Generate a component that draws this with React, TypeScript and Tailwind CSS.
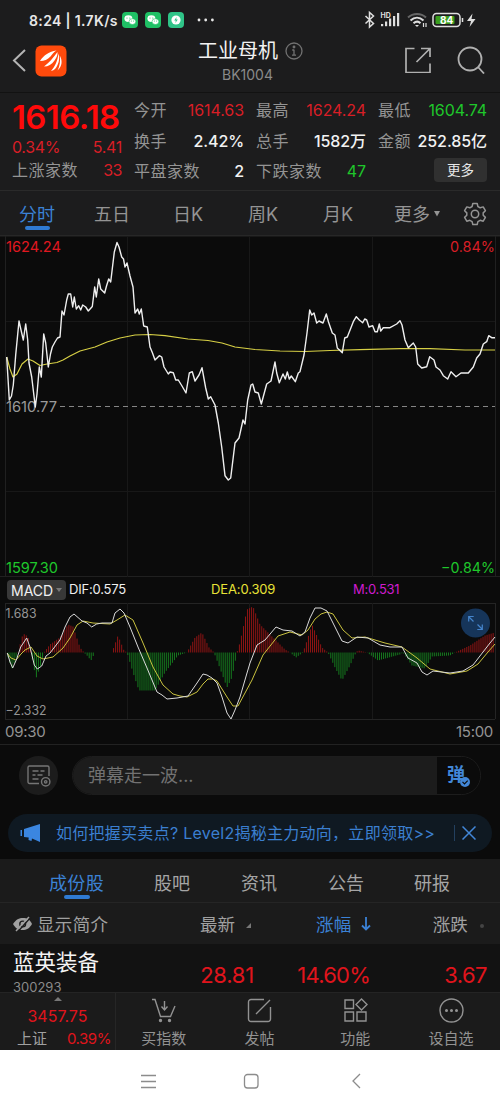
import React from "react";

type Point = [number, number];

const PRICE =
  "6.7,357 9.3,400 11.5,396 13.3,385 15.7,355 19,321 21,330 23.3,340 25.7,324 27.7,340 29,363 31.7,377 35.3,407 37,394 39.3,367 41.3,377 43.7,334 45.7,343 48.3,367 50.5,354 52.3,347 55,342 57.5,338 60,337 62,311 64,315 66.7,300 68.3,294 70.7,294 72.7,307 74.3,297 76.3,309 78.7,305.7 80.7,310 82.7,305 85.7,307 88.3,311 92.3,306.5 94.7,287 96.3,297 98.7,279 100.7,289 104.7,293 106.5,286 108.7,279 110.7,282 114.3,252 117,242.5 119,247 121.7,257 123.5,259 125,267 127,263 130,276 133,287 135,313 137.7,309 139.3,314 141.3,309 143.7,326 147.3,327 150,347 152.5,353 155,360 159.3,355.7 161.7,357 164,367 166.5,371 168.3,374 170,372 173.3,372.7 175.7,380 178.3,380 182,386 186,393 189.3,373 192.3,371.7 195,381 199,375 202,367.7 205.7,388 208.3,399 210.7,396.7 215,405 218.3,423 221.7,447 225,475.7 228.3,480 230.7,478 235,443 239,438 243,420 245,424 247.7,400 251,385 252.7,384 255,392 258.3,393 261.3,404 264,394 266.7,384 271,381 275,362 276.7,373 279.3,382.7 283,374 285.3,379 287.3,372 289.3,379 291.3,376 295.3,381.7 298.3,373 300,371.7 304,355 307,333 309.7,310 311.7,315 314,313 316.7,323 319,321 323,323 326.3,314 328.5,322 332.3,333 335,335 337.3,348 342.3,352.7 344.7,338 347.3,337 353.3,321.7 356.3,316.7 359.3,320 362.7,322.7 364.7,319 366.7,320 369,327 372.7,325.7 375,331.7 377.3,331.7 379.3,324 380.7,331 383.3,327.7 390,327.7 396.7,324 400,320.7 402,325 405,340 408.3,347.7 413.3,343 415.7,347 417.7,364 421.7,368 426.7,366.7 429.7,356.7 434,360 436,367 440,370 443.3,375.7 447.7,379 451,371.7 456,376.7 461,373 468.3,373 473.3,367 476.7,358 480,354 483.3,344 486.7,341.7 488.7,335.7 491.7,337.7 495,337.7";

const AVERAGE =
  "6.7,357 10,369 13,377 17,374 22,364 28,359 33,361 40,365.5 47,364 57,362.5 63,360 70,356 80,351 95,347 107,342 120,338 135,335 150,334.5 165,335.7 188,339 208,340.5 222,343 235,347 255,349.5 280,351 305,351.5 330,350.5 360,349.7 400,348.7 430,348.6 465,350 495,350";

const DIF =
  "7.3,653 10,662 12.7,668 16.7,659 20.7,647 26.7,638 30,647 34.3,665 37.3,669 41.7,666 46,656 50,653 60,640 65,627 70,617 74,614 82,621 87,623 91.7,627 96.7,624 102,623 112,623 115,613 120,609 124,613 130,627 138,647 147,668 157,692 162,695 167,699 177,698 188,696 197,683 203,674 207,675 212,678 217,683 222,697 227,713 231,719 235,710 240,697 247,673 250,663 257,645 265,640 276,627 283,630 292,631 300,636 305,632 310,618 315,608 321,608 327,611 333,623 342,641 348,643 357,637 368,638 380,645 390,647 402,647 408,658 417,663 422,672 427,675 433,671 450,673 463,671 473,665 483,652 490,643 495,637";

const DEA =
  "7,653 11,658 16,660 21,654 25,650 31,647 37,656 43,659 53,657 63,648 70,638 77,625 83,621 93,623 110,624 117,620 125,615 133,620 143,643 153,667 163,685 173,694 180,696 187,697 197,692 203,684 208,679 213,679 217,681 227,697 233,706 238,706 245,693 252,680 263,655 278,636 290,632 302,635 308,630 315,619 321,614 327,612 333,614 343,630 352,638 365,637 385,643 402,647 417,658 430,669 450,674 467,671 478,664 488,652 495,644";

// signed bar heights: negative is above the zero axis
const HISTOGRAM: Point[] = [
  [7, 2], [12, 16], [17, 3], [18, 0], [23, -19], [28, -16], [31, 0], [36, 26],
  [41, 12], [44, 0], [50, -8], [60, -15], [68, -28], [73, -26], [80, -5],
  [84, 0], [87, 3], [91, 8], [95, 0], [112, 0], [118, -17], [124, -2],
  [127, 0], [133, 20], [139, 38], [155, 38], [165, 20], [178, 3], [187, 0],
  [195, -15], [202, -20], [209, -5], [214, 0], [220, 16], [227, 35],
  [232, 25], [237, 0], [240, -10], [247, -43], [253, -46], [260, -28],
  [270, -18], [285, -3], [290, 0], [296, 5], [303, 0], [307, -12],
  [312, -28], [322, -5], [328, 0], [335, 15], [342, 28], [350, 13], [356, 0],
  [358, -2], [367, 0], [378, 8], [400, 2], [403, 0], [412, 13], [425, 16],
  [432, 4], [450, 3], [455, 0], [470, -7], [485, -17], [495, -20],
];

function barAt(x: number) {
  const i = HISTOGRAM.findIndex(([px]) => px >= x);
  if (i <= 0) return HISTOGRAM[0][1];
  const [x0, y0] = HISTOGRAM[i - 1];
  const [x1, y1] = HISTOGRAM[i];
  return y0 + ((y1 - y0) * (x - x0)) / (x1 - x0);
}

const BARS = Array.from({ length: 240 }, (_, i) => 8 + i * 2.03)
  .filter((x) => x < 495)
  .map((x) => ({ x, h: barAt(x) }));

function WeChat() {
  return (
    <svg viewBox="0 0 16 16" className="h-4 w-4">
      <rect width="16" height="16" rx="4" fill="#1fc065" />
      <ellipse cx="6.4" cy="6.6" rx="4" ry="3.4" fill="#fff" />
      <ellipse cx="10.4" cy="9.6" rx="3.4" ry="2.9" fill="#fff" stroke="#1fc065" strokeWidth=".6" />
      <g fill="#1fc065">
        <circle cx="5" cy="6" r=".6" />
        <circle cx="7.8" cy="6" r=".6" />
        <circle cx="9.3" cy="9.1" r=".5" />
        <circle cx="11.6" cy="9.1" r=".5" />
      </g>
    </svg>
  );
}

function StatusBar() {
  return (
    <div className="flex h-10 items-center pl-[29px] pr-[21px] text-white">
      <span className="w-[93px] whitespace-nowrap text-[14px] font-semibold tracking-[0.025em] text-[#e8e8e8]">
        8:24 | 1.7K/s
      </span>
      <div className="flex gap-[7px]">
        <WeChat />
        <WeChat />
        <svg viewBox="0 0 16 16" className="h-4 w-4">
          <rect width="16" height="16" rx="4" fill="#2fc488" />
          <circle cx="8" cy="8" r="4.600" fill="#fff" />
          <path d="M8.600 5L6.200 8.500h1.600L7.400 11l2.400-3.400H8.200z" fill="#2fc488" />
        </svg>
      </div>
      <svg viewBox="0 0 18 4" className="ml-[13px] h-1 w-[18px]" fill="#e8e8e8">
        <circle cx="2" cy="2" r="1.400" />
        <circle cx="8.700" cy="2" r="1.400" />
        <circle cx="15.400" cy="2" r="1.400" />
      </svg>
      <svg viewBox="0 0 116 20" className="ml-auto h-5 w-[116px] shrink-0" fill="none" stroke="#dedede">
        <path d="M2.500 6l8 7.500-4 3.500V2.500l4 3.500-8 7.500" strokeWidth="1.500" />
        <g fill="#dedede" stroke="none">
          <text x="17.500" y="7.500" className="text-[7px] font-bold">HD</text>
          <rect x="18" y="14" width="2.200" height="2.200" />
          <rect x="22" y="11.500" width="2.200" height="4.700" />
          <rect x="26" y="8.500" width="2.200" height="7.700" />
          <rect x="30" y="6" width="2.200" height="10.200" />
          <rect x="34" y="3" width="2.200" height="13.200" />
        </g>
        <path d="M45 7.500c5-4.800 13-4.800 18 0" stroke="#666" strokeWidth="2" />
        <path d="M47.500 10.500c4-3.700 9-3.700 13 0M50.500 13.300c2.300-2 5-2 7 0" strokeWidth="2" />
        <path d="M52 15l2 2 2-2z" fill="#dedede" stroke="none" />
        <path d="M60.500 13v4M63 13v4" strokeWidth="1.200" />
        <rect x="70" y="3.500" width="27" height="13" rx="3.500" strokeWidth="1.500" />
        <rect x="72.500" y="6" width="19" height="8" rx="1" fill="#3a9e1e" stroke="none" />
        <path d="M99.500 8v4" strokeWidth="1.500" />
        <text x="77" y="13.600" fill="#fff" stroke="none" className="text-[10px] font-bold">84</text>
        <path d="M109.500 3.500l-5.500 7.500h4l-1.500 6 6-8h-4z" fill="#dedede" stroke="none" />
      </svg>
    </div>
  );
}

function Header() {
  return (
    <div className="flex h-[53px] items-start border-b border-[#121212] pl-3 pr-[15px]">
      <svg viewBox="0 0 14 24" className="mt-2 h-6 w-3.5" fill="none" stroke="#b4b4b4" strokeWidth="2">
        <path d="M13 2L2 12.500 13 23" />
      </svg>
      <svg viewBox="0 0 32 32" className="ml-[9px] mt-[5px] h-8 w-8">
        <rect x=".5" y=".5" width="31" height="31" rx="6" fill="#ff4a0c" />
        <g fill="#fff">
          <path d="M5 16C9 10 14 6.500 21.500 5.500c-3 1.500-4 3.500-6 6-3 3.300-6 4.500-10.500 4.500z" />
          <path d="M9 21.500c5-3.500 9-8.500 13.500-14.500.3 3-.8 5.500-3 8.500-3 4-6 6-10.500 6z" />
          <path d="M16 26c4-4.500 6.500-9.500 7.500-17.500 1 3 1 7.500-1 11.500-1.500 3.300-3 5.200-6.500 6z" />
          <path d="M22.500 25.500c2.300-4 3-9.500 2.300-15 2.700 5 2.700 10.500-2.300 15z" />
        </g>
      </svg>
      <div className="ml-[131px] w-[105px]">
        <div className="flex h-[22px] items-center whitespace-nowrap text-[20px] text-[#f2f2f2]">
          工业母机
          <svg viewBox="0 0 18 18" className="ml-[7px] h-[18px] w-[18px] shrink-0" fill="none" stroke="#717171" strokeWidth="1.300">
            <circle cx="9" cy="9" r="8" />
            <path d="M9 7.700V13M7.200 8h2M7 13.200h4" />
            <circle cx="9" cy="5" r=".8" fill="#717171" />
          </svg>
        </div>
        <div className="ml-6 mt-[4px] text-[14px] leading-[18px] text-[#8a8a8a]">BK1004</div>
      </div>
      <svg viewBox="0 0 26 26" className="ml-auto mt-[7px] h-[26px] w-[26px]" fill="none" stroke="#b0b0b0" strokeWidth="1.700">
        <path d="M9.500 1.500H1v24h24v-9M11.500 15L24.500 2M16 1.500h9v8.500" />
      </svg>
      <svg viewBox="0 0 28 28" className="ml-[26px] mt-[6px] h-7 w-7" fill="none" stroke="#b0b0b0" strokeWidth="1.800">
        <circle cx="13" cy="13" r="11.500" />
        <path d="M21 21l6 6.500" />
      </svg>
    </div>
  );
}

const STATS = [
  [
    { label: "今开", value: "1614.63", color: "text-[#d81e26]" },
    { label: "换手", value: "2.42%", color: "font-medium text-[#f2f2f2]" },
    { label: "平盘家数", value: "2", color: "font-medium text-[#f2f2f2]" },
  ],
  [
    { label: "最高", value: "1624.24", color: "text-[#d81e26]" },
    { label: "总手", value: "1582万", color: "font-medium text-[#f2f2f2]" },
    { label: "下跌家数", value: "47", color: "text-[#1fc72b]" },
  ],
  [
    { label: "最低", value: "1604.74", color: "text-[#1fc72b]" },
    { label: "金额", value: "252.85亿", color: "font-medium text-[#f2f2f2]" },
  ],
];

function Quote() {
  return (
    <div className="grid h-[98px] grid-cols-[110px_110px_110px_109px] gap-x-3 border-b border-[#2a2a2a] pl-3">
      <div>
        <div className="mt-[3px] h-[41px] w-[108px] whitespace-nowrap text-[33px] font-semibold leading-[42px] tracking-[-0.018em] text-[#ff0a0a]">
          1616.18
        </div>
        <div className="flex h-[19px] items-center justify-between text-[16px] tracking-[-0.02em] text-[#d81e26]">
          <span>0.34%</span>
          <span>5.41</span>
        </div>
        <div className="mt-[3px] flex h-[22px] items-center justify-between text-[16px] text-[#d81e26]">
          <span className="tracking-[0.03em] text-[#949494]">上涨家数</span>
          <span className="-tracking-[0.03em]">33</span>
        </div>
      </div>
      {STATS.map((col, i) => (
        <div key={i} className="grid h-[92px] grid-rows-[31px_31px_30px] pt-px text-[16px]">
          {col.map((s) => (
            <div key={s.label} className="flex items-center justify-between whitespace-nowrap">
              <span className="tracking-[0.03em] text-[#949494]">{s.label}</span>
              <span className={`${s.color} tracking-[-0.005em]`}>{s.value}</span>
            </div>
          ))}
          {i === 2 && (
            <button className="ml-auto mt-[2px] h-6 w-[53px] rounded-sm bg-[#303030] text-[13.500px] text-[#e8e8e8]">
              更多
            </button>
          )}
        </div>
      ))}
    </div>
  );
}

function PeriodTabs() {
  return (
    <div className="flex h-[44px] items-center pt-0.5 text-[18px] text-[#949494]">
      <div className="relative ml-[19px] w-[75px] text-[#3b82d6]">
        分时
        <span className="absolute -bottom-[2px] left-1.5 h-[3.500px] w-[25px] rounded-full bg-[#2f7ad3]" />
      </div>
      <div className="w-[79px]">五日</div>
      <div className="w-[75px]">日K</div>
      <div className="w-[75px]">周K</div>
      <div className="w-[71px]">月K</div>
      <div className="flex w-[69px] items-center">
        更多
        <svg viewBox="0 0 6 6" className="ml-1 h-1.5 w-1.5" fill="#949494">
          <path d="M0 0h6L3 5.500z" />
        </svg>
      </div>
      <svg viewBox="0 0 24 24" className="h-[24px] w-[24px]" fill="none" stroke="#949494" strokeWidth="1.500" strokeLinejoin="round">
        <path d="M9.800 1.500h4.400l.7 3 2.300 1.300 3-.9 2.200 3.800-2.200 2.200v2.300l2.200 2.200-2.200 3.800-3-.9-2.300 1.300-.7 2.900H9.800l-.7-2.900-2.300-1.300-3 .9-2.200-3.800 2.200-2.200v-2.300L1.600 8.700l2.200-3.800 3 .9 2.300-1.300z" />
        <circle cx="12" cy="12" r="3.700" />
      </svg>
    </div>
  );
}

function PriceChart() {
  return (
    <svg viewBox="0 235 500 342" className="block h-[342px] w-[500px]" fill="none">
      <path d="M0 235.500h500" stroke="#272727" strokeWidth="2" />
      <path d="M5.500 236v341M495.500 236v341M0 576.500h500" stroke="#202020" />
      <path d="M127.500 236v341M249.500 236v341M372.500 236v341M6 321.500h489M6 491.500h489" stroke="#181818" />
      <path d="M60 406.500h435" stroke="#858585" strokeDasharray="5 4" />
      <g className="text-[14px]">
        <text x="6" y="251.500" fill="#e01820" textLength="55" lengthAdjust="spacingAndGlyphs">1624.24</text>
        <text x="450" y="251.500" fill="#d81e26" textLength="45" lengthAdjust="spacingAndGlyphs">0.84%</text>
        <text x="6" y="412" fill="#9a9a9a" textLength="51" lengthAdjust="spacingAndGlyphs">1610.77</text>
        <text x="6" y="572.500" fill="#1fc72b" textLength="52" lengthAdjust="spacingAndGlyphs">1597.30</text>
        <text x="441" y="572.500" fill="#1fc72b" textLength="54" lengthAdjust="spacingAndGlyphs">−0.84%</text>
      </g>
      <polyline points={AVERAGE} stroke="#d6cf45" strokeWidth="1.200" strokeLinejoin="round" />
      <polyline points={PRICE} stroke="#efefef" strokeWidth="1.400" strokeLinejoin="round" />
    </svg>
  );
}

function MacdLegend() {
  return (
    <div className="flex h-[26px] items-center whitespace-nowrap pl-[7px] text-[13px] text-[#f0f0f0]">
      <div className="flex h-5 w-[59px] items-center rounded-sm bg-[#383838] pl-1 text-[14px]">
        MACD
        <svg viewBox="0 0 6 4" className="ml-[3px] h-1 w-1.5" fill="#777">
          <path d="M0 0h6L3 4z" />
        </svg>
      </div>
      <span className="ml-[3px] w-[142px] tracking-[-0.015em]">DIF:0.575</span>
      <span className="w-[142px] tracking-[-0.01em] text-[#e8e337]">DEA:0.309</span>
      <span className="tracking-[-0.02em] text-[#cf1ccf]">M:0.531</span>
    </div>
  );
}

function MacdChart() {
  return (
    <svg viewBox="0 603 500 117" className="block h-[117px] w-[500px]" fill="none">
      <path d="M5.500 603v116M495.500 603v116M5 603.500h490M5 719.500h490" stroke="#242424" />
      <path d="M127.500 603v116M249.500 603v116M372.500 603v116" stroke="#191919" />
      {BARS.map(({ x, h }) => (
        <path key={x} d={`M${x} 652.500v${h}`} stroke={h < 0 ? "#8f1414" : "#157a1e"} strokeWidth="1" />
      ))}
      <g fill="#949494" className="text-[12.500px]">
        <text x="5.500" y="617.500" textLength="31" lengthAdjust="spacingAndGlyphs">1.683</text>
        <text x="5.500" y="715" textLength="41" lengthAdjust="spacingAndGlyphs">−2.332</text>
      </g>
      <polyline points={DEA} stroke="#c9c23f" strokeWidth="1" strokeLinejoin="round" />
      <polyline points={DIF} stroke="#dadada" strokeWidth="1" strokeLinejoin="round" />
      <circle cx="475.500" cy="623" r="14.500" fill="#173a63" fillOpacity=".9" />
      <path d="M473.500 621.500l-4.500-4.500M468.700 621.500v-5h5M477.500 624.500l4.500 4.500M482.300 624.500v5h-5" stroke="#4584cb" strokeWidth="1.200" />
    </svg>
  );
}

function Danmu() {
  return (
    <div className="flex h-[63px] items-center border-t border-[#222] pb-px pl-[19px]">
      <div className="flex h-[39px] w-[39px] items-center justify-center rounded-full bg-[#1c1c1c]">
        <svg viewBox="0 0 24 22" className="h-[22px] w-6" fill="none" stroke="#757575" strokeWidth="1.400">
          <path d="M12 18.500H2.500a1.500 1.500 0 01-1.500-1.500V2.500A1.500 1.500 0 012.500 1h18A1.500 1.500 0 0122 2.500V11M5.500 6h6M13.500 6h4M5.500 10h3M10.500 10h5M5.500 14h6" />
          <circle cx="18.700" cy="16.800" r="4.200" />
          <circle cx="18.700" cy="16.800" r="1.200" />
        </svg>
      </div>
      <div className="ml-[14px] flex h-[39px] w-[409px] overflow-hidden rounded-full border border-[#1d1d1d]">
        <div className="flex w-[364px] items-center bg-[#1c1c1c] pl-[15px] text-[18px] text-[#727272]">弹幕走一波...</div>
        <div className="relative flex-1 bg-[#0b0b0b] pl-[10px] text-[18px] font-bold leading-[35px] text-[#4287d8]">
          弹
          <svg viewBox="0 0 10 10" className="absolute left-[23px] top-[20px] h-[10px] w-[10px]">
            <circle cx="5" cy="5" r="5" fill="#4287d8" />
            <path d="M2.500 4.800l2 2 3.200-3.200" fill="none" stroke="#0b0b0b" strokeWidth="1.200" />
          </svg>
        </div>
      </div>
    </div>
  );
}

function Banner() {
  return (
    <div className="mx-2 mt-[7px] flex h-[38px] items-center rounded-full bg-[#0f1922] pl-3 text-[#3b7fd0]">
      <svg viewBox="0 0 20 18" className="h-[18px] w-5" fill="#3b86e0">
        <path d="M20 0v18l-8-3.500-.5 2.500-3-1 .2-2.500L4 13V5zM.5 6H2v6H.5z" />
      </svg>
      <span className="ml-4 whitespace-nowrap text-[16px] tracking-[0.017em]">
        如何把握买卖点? Level2揭秘主力动向，立即领取&gt;&gt;
      </span>
      <span className="ml-auto h-4 w-px bg-[#23405f]" />
      <svg viewBox="0 0 14 14" className="ml-[7px] mr-4 h-3.5 w-3.5" stroke="#4287d8" strokeWidth="1.500">
        <path d="M.5.5l13 13M13.500.5l-13 13" />
      </svg>
    </div>
  );
}

function ListTabs() {
  return (
    <div className="mt-[7px] flex h-[44px] items-center border-b border-[#252525] bg-[#1b1b1b] pt-[5px] text-[18px] text-[#a5a5a5]">
      <div className="relative ml-[49px] w-[105px] tracking-[0.02em] text-[#3b82d6]">
        成份股
        <span className="absolute -bottom-[2px] left-[15px] h-[3.500px] w-[26px] rounded-full bg-[#2f7ad3]" />
      </div>
      <div className="w-[87px]">股吧</div>
      <div className="w-[87px]">资讯</div>
      <div className="w-[86px]">公告</div>
      <div>研报</div>
    </div>
  );
}

function ListHead() {
  return (
    <div className="flex h-[41px] items-center bg-[#1b1b1b] pt-1 text-[17.500px] text-[#a0a0a0]">
      <svg viewBox="0 0 20 16" className="-mt-1 ml-[13px] h-4 w-5">
        <path d="M0 8c3-4.500 6-6 10-6s7 1.500 9 6c-2.500 4.500-5.500 6-9.500 6S2.500 12.500 0 8z" fill="#a0a0a0" />
        <circle cx="9.700" cy="8" r="3.600" fill="#1b1b1b" />
        <circle cx="9.700" cy="8" r="2.200" fill="#a0a0a0" />
        <path d="M4.500 16L18 1" stroke="#1b1b1b" strokeWidth="1.500" />
        <path d="M3 15L16 1" stroke="#a0a0a0" strokeWidth="1.500" />
      </svg>
      <span className="ml-1 w-[163px] tracking-[0.02em]">显示简介</span>
      <span className="w-[46px]">最新</span>
      <svg viewBox="0 0 5 5" className="h-[5px] w-[5px]" fill="#777"><path d="M5 0v5H0z" /></svg>
      <span className="ml-[65px] tracking-[0.02em] text-[#3b82d6]">涨幅</span>
      <svg viewBox="0 0 10 14" className="-mt-1 ml-[9px] h-3.5 w-2.5" fill="none" stroke="#3b82d6" strokeWidth="1.800">
        <path d="M5 0v12.500M1 8.500l4 4 4-4" />
      </svg>
      <span className="ml-[62px]">涨跌</span>
      <svg viewBox="0 0 4 4" className="ml-3 h-1 w-1" fill="#444"><circle cx="2" cy="2" r="2" /></svg>
    </div>
  );
}

function StockRow() {
  return (
    <div className="flex h-12 bg-[#121212] px-[13px] text-[22px] text-[#e0141c]">
      <div className="w-[150px]">
        <div className="mt-[3px] text-[21.500px] leading-[31px] text-[#f4f4f4]">蓝英装备</div>
        <div className="relative h-[18px] whitespace-nowrap text-[13px] leading-[18px] text-[#8a8a8a]">300293</div>
      </div>
      <div className="w-[91px] pt-[15px] text-right tracking-[-0.01em]">28.81</div>
      <div className="w-[116px] pt-[15px] text-right tracking-[-0.035em]">14.60%</div>
      <div className="flex-1 pt-[15px] text-right tracking-[-0.025em]">3.67</div>
    </div>
  );
}

const ACTIONS = [
  {
    label: "买指数",
    icon: (
      <>
        <path d="M1 1.500h3l5.500 17h10L24 8M13.500 3v8.500M10.500 8.500l3 3.500 3-3.500" />
        <circle cx="9.500" cy="22.500" r="1" fill="#929292" />
        <circle cx="18.500" cy="22.500" r="1" fill="#929292" />
      </>
    ),
  },
  {
    label: "发帖",
    icon: <path d="M17 1.500H4A2.500 2.500 0 001.500 4v17A2.500 2.500 0 004 23.500h17a2.500 2.500 0 002.500-2.500V9M9 16L23 2" />,
  },
  {
    label: "功能",
    icon: <path d="M2 2h8.500v8.500H2zM2 14h8.500v9H2zM14 14h9v9h-9zM18.500 1l5.500 5.500-5.500 5.500L13 6.500z" />,
  },
  {
    label: "设自选",
    icon: (
      <>
        <circle cx="12.500" cy="12.500" r="11.500" />
        <g fill="#929292">
          <circle cx="7.500" cy="12.500" r=".8" />
          <circle cx="12.500" cy="12.500" r=".8" />
          <circle cx="17.500" cy="12.500" r=".8" />
        </g>
      </>
    ),
  },
];

function BottomBar() {
  return (
    <div className="flex h-[58px] border-t border-[#242424] bg-[#1b1b1b]">
      <div className="w-[116px] border-r border-[#262626] pt-1 text-[#e0141c]">
        <svg viewBox="0 0 8 4" className="ml-[54px] h-1 w-2" fill="#777">
          <path d="M0 4l4-4 4 4z" />
        </svg>
        <div className="mt-[5px] text-center text-[16px] leading-[20px]">3457.75</div>
        <div className="mt-px flex items-center justify-between pl-[17px] pr-[4px] text-[15px] leading-[23px]">
          <span className="text-[#a0a0a0]">上证</span>
          <span className="tracking-[-0.03em]">0.39%</span>
        </div>
      </div>
      <div className="grid flex-1 grid-cols-4 pr-px">
        {ACTIONS.map((a) => (
          <div key={a.label} className="flex flex-col items-center pt-[5px] text-[15px] leading-[22px] text-[#929292]">
            <svg viewBox="0 0 25 25" className="mb-[5px] h-[25px] w-[25px]" fill="none" stroke="#929292" strokeWidth="1.400">
              {a.icon}
            </svg>
            {a.label}
          </div>
        ))}
      </div>
    </div>
  );
}

function SystemNav() {
  return (
    <div className="flex h-[61px] items-center bg-white pl-[141px]">
      <svg viewBox="0 0 220 16" className="h-4 w-[220px]" fill="none" stroke="#8c8c8c" strokeWidth="1.300">
        <path d="M0 2.500h15M0 8.500h15M0 14.500h15" />
        <rect x="103.500" y="1.500" width="13.500" height="13.500" rx="3" />
        <path d="M219 1l-7 7 7 7" />
      </svg>
    </div>
  );
}

export default function App() {
  return (
    <div className="h-[1111px] w-[500px] overflow-hidden bg-[#0b0b0b] font-['Inter','Noto_Sans_CJK_SC',sans-serif]">
      <div className="h-[235px] bg-[#1c1c1d]">
        <StatusBar />
        <Header />
        <Quote />
        <PeriodTabs />
      </div>
      <PriceChart />
      <MacdLegend />
      <MacdChart />
      <div className="flex h-[24px] items-center justify-between pl-[5px] pr-[7px] text-[15px] tracking-[-0.02em] text-[#949494]">
        <span>09:30</span>
        <span>15:00</span>
      </div>
      <Danmu />
      <Banner />
      <ListTabs />
      <ListHead />
      <StockRow />
      <BottomBar />
      <SystemNav />
    </div>
  );
}
